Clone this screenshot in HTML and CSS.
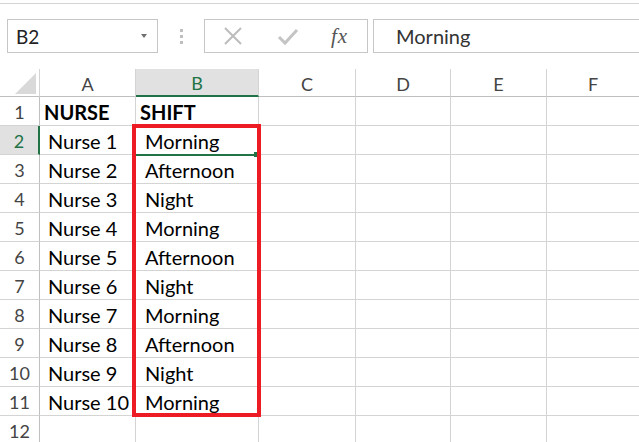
FILE: index.html
```html
<!DOCTYPE html>
<html>
<head>
<meta charset="utf-8">
<link rel="stylesheet" href="styles.css">
</head>
<body>
<div class="topline"></div>
<div class="fbar">
  <div class="namebox"><span class="nb-text">B2</span><span class="nb-arrow"></span></div>
  <div class="dots"><i></i><i></i><i></i></div>
  <div class="btns">
    <svg class="ico-x" width="20" height="20" viewBox="0 0 20 20"><path d="M2 2 L18 18 M18 2 L2 18" stroke="#bcbcbc" stroke-width="2" fill="none"/></svg>
    <svg class="ico-ok" width="22" height="20" viewBox="0 0 22 20"><path d="M2 10 L8 16 L20 3" stroke="#c4c4c4" stroke-width="3" fill="none"/></svg>
    <span class="fx">fx</span>
  </div>
  <div class="finput">Morning</div>
</div>
<div class="sheet">
  <div class="grid">
    <div class="ch corner"><svg width="39" height="28" viewBox="0 0 39 28"><polygon points="15,25 36,25 36,4" fill="#d9d9d9"/></svg></div>
    <div class="ch">A</div><div class="ch sel">B</div><div class="ch">C</div><div class="ch">D</div><div class="ch">E</div><div class="ch last">F</div>

    <div class="rh">1</div><div class="c b nurse-h">NURSE</div><div class="c b shift-h">SHIFT</div><div class="c"></div><div class="c"></div><div class="c"></div><div class="c last"></div>
    <div class="rh sel">2</div><div class="c n">Nurse 1</div><div class="c s">Morning</div><div class="c"></div><div class="c"></div><div class="c"></div><div class="c last"></div>
    <div class="rh">3</div><div class="c n">Nurse 2</div><div class="c s">Afternoon</div><div class="c"></div><div class="c"></div><div class="c"></div><div class="c last"></div>
    <div class="rh">4</div><div class="c n">Nurse 3</div><div class="c s">Night</div><div class="c"></div><div class="c"></div><div class="c"></div><div class="c last"></div>
    <div class="rh">5</div><div class="c n">Nurse 4</div><div class="c s">Morning</div><div class="c"></div><div class="c"></div><div class="c"></div><div class="c last"></div>
    <div class="rh">6</div><div class="c n">Nurse 5</div><div class="c s">Afternoon</div><div class="c"></div><div class="c"></div><div class="c"></div><div class="c last"></div>
    <div class="rh">7</div><div class="c n">Nurse 6</div><div class="c s">Night</div><div class="c"></div><div class="c"></div><div class="c"></div><div class="c last"></div>
    <div class="rh">8</div><div class="c n">Nurse 7</div><div class="c s">Morning</div><div class="c"></div><div class="c"></div><div class="c"></div><div class="c last"></div>
    <div class="rh">9</div><div class="c n">Nurse 8</div><div class="c s">Afternoon</div><div class="c"></div><div class="c"></div><div class="c"></div><div class="c last"></div>
    <div class="rh">10</div><div class="c n">Nurse 9</div><div class="c s">Night</div><div class="c"></div><div class="c"></div><div class="c"></div><div class="c last"></div>
    <div class="rh">11</div><div class="c n">Nurse 10</div><div class="c s">Morning</div><div class="c"></div><div class="c"></div><div class="c"></div><div class="c last"></div>
    <div class="rh">12</div><div class="c"></div><div class="c"></div><div class="c"></div><div class="c"></div><div class="c"></div><div class="c last"></div>
  </div>
  <div class="selbottom"></div>
  <div class="handle"></div>
  <div class="redbox"></div>
</div>
</body>
</html>
```

FILE: styles.css
```css
html, body {
  margin: 0;
  padding: 0;
  background: #ffffff;
  width: 639px;
  height: 442px;
  overflow: hidden;
  font-family: Lato, "Open Sans", sans-serif;
}
.topline {
  height: 3px;
  border-bottom: 1px solid #d4d4d4;
}
.fbar {
  display: flex;
  align-items: stretch;
  height: 34px;
  margin-top: 15px;
  padding-left: 7px;
}
.namebox {
  box-sizing: border-box;
  width: 151px;
  border: 1px solid #c6c6c6;
  display: flex;
  align-items: center;
  justify-content: space-between;
  padding: 0 10px 0 8px;
}
.nb-text {
  font-size: 19px;
  color: #222;
}
.nb-arrow {
  width: 0;
  height: 0;
  border-left: 3.5px solid transparent;
  border-right: 3.5px solid transparent;
  border-top: 4px solid #6f6f6f;
}
.dots {
  width: 46px;
  display: flex;
  flex-direction: column;
  align-items: center;
  justify-content: center;
  gap: 3px;
}
.dots i {
  display: block;
  width: 3px;
  height: 3px;
  background: #bfbfbf;
}
.btns {
  box-sizing: border-box;
  width: 164px;
  border: 1px solid #c6c6c6;
  display: flex;
  align-items: center;
  padding-left: 18px;
}
.ico-x { margin-right: 34px; }
.ico-ok { margin-right: 32px; margin-top: 2px; }
.fx {
  font-family: "Liberation Serif", "DejaVu Serif", serif;
  font-style: italic;
  font-size: 21px;
  color: #555;
  letter-spacing: 1px;
}
.finput {
  box-sizing: border-box;
  flex: 1;
  margin-left: 5px;
  border: 1px solid #c6c6c6;
  border-right: none;
  display: flex;
  align-items: center;
  padding-left: 22px;
  font-size: 20px;
  color: #333;
}
.sheet {
  position: relative;
  margin-top: 16px;
}
.grid {
  display: grid;
  grid-template-columns: 40px 96px 123px 97px 95px 96px 1fr;
  grid-template-rows: 28px repeat(12, 29px);
}
.ch {
  box-sizing: border-box;
  border-right: 1px solid #d4d4d4;
  border-bottom: 1px solid #bfbfbf;
  display: flex;
  align-items: center;
  justify-content: center;
  font-size: 18px;
  color: #444;
  padding-top: 2px;
}
.ch.corner { padding: 0; align-items: stretch; justify-content: stretch; }
.ch.sel {
  background: #e1e1e1;
  color: #217346;
  border-bottom: 2px solid #217346;
}
.ch.last, .c.last { border-right: none; }
.rh {
  box-sizing: border-box;
  border-right: 1px solid #bfbfbf;
  border-bottom: 1px solid #d4d4d4;
  display: flex;
  align-items: center;
  justify-content: center;
  font-size: 18px;
  color: #444;
  padding-top: 1px;
}
.rh.sel {
  background: #e1e1e1;
  color: #217346;
  border-right: 2px solid #217346;
}
.c {
  box-sizing: border-box;
  border-right: 1px solid #d4d4d4;
  border-bottom: 1px solid #d4d4d4;
  display: flex;
  align-items: center;
  font-size: 20px;
  color: #000;
  padding-top: 1px;
  white-space: nowrap;
}
.c.b { font-weight: bold; }
.nurse-h { padding-left: 4px; }
.shift-h { padding-left: 4px; }
.c.n { padding-left: 8px; }
.c.s { padding-left: 9px; }
.selbottom {
  position: absolute;
  left: 136px;
  top: 85px;
  width: 120px;
  height: 2px;
  background: #217346;
}
.handle {
  position: absolute;
  left: 254px;
  top: 83px;
  width: 4px;
  height: 5px;
  background: #217346;
}
.redbox {
  position: absolute;
  left: 132px;
  top: 55px;
  width: 129px;
  height: 293px;
  box-sizing: border-box;
  border: 4px solid #ed1c24;
}
```
